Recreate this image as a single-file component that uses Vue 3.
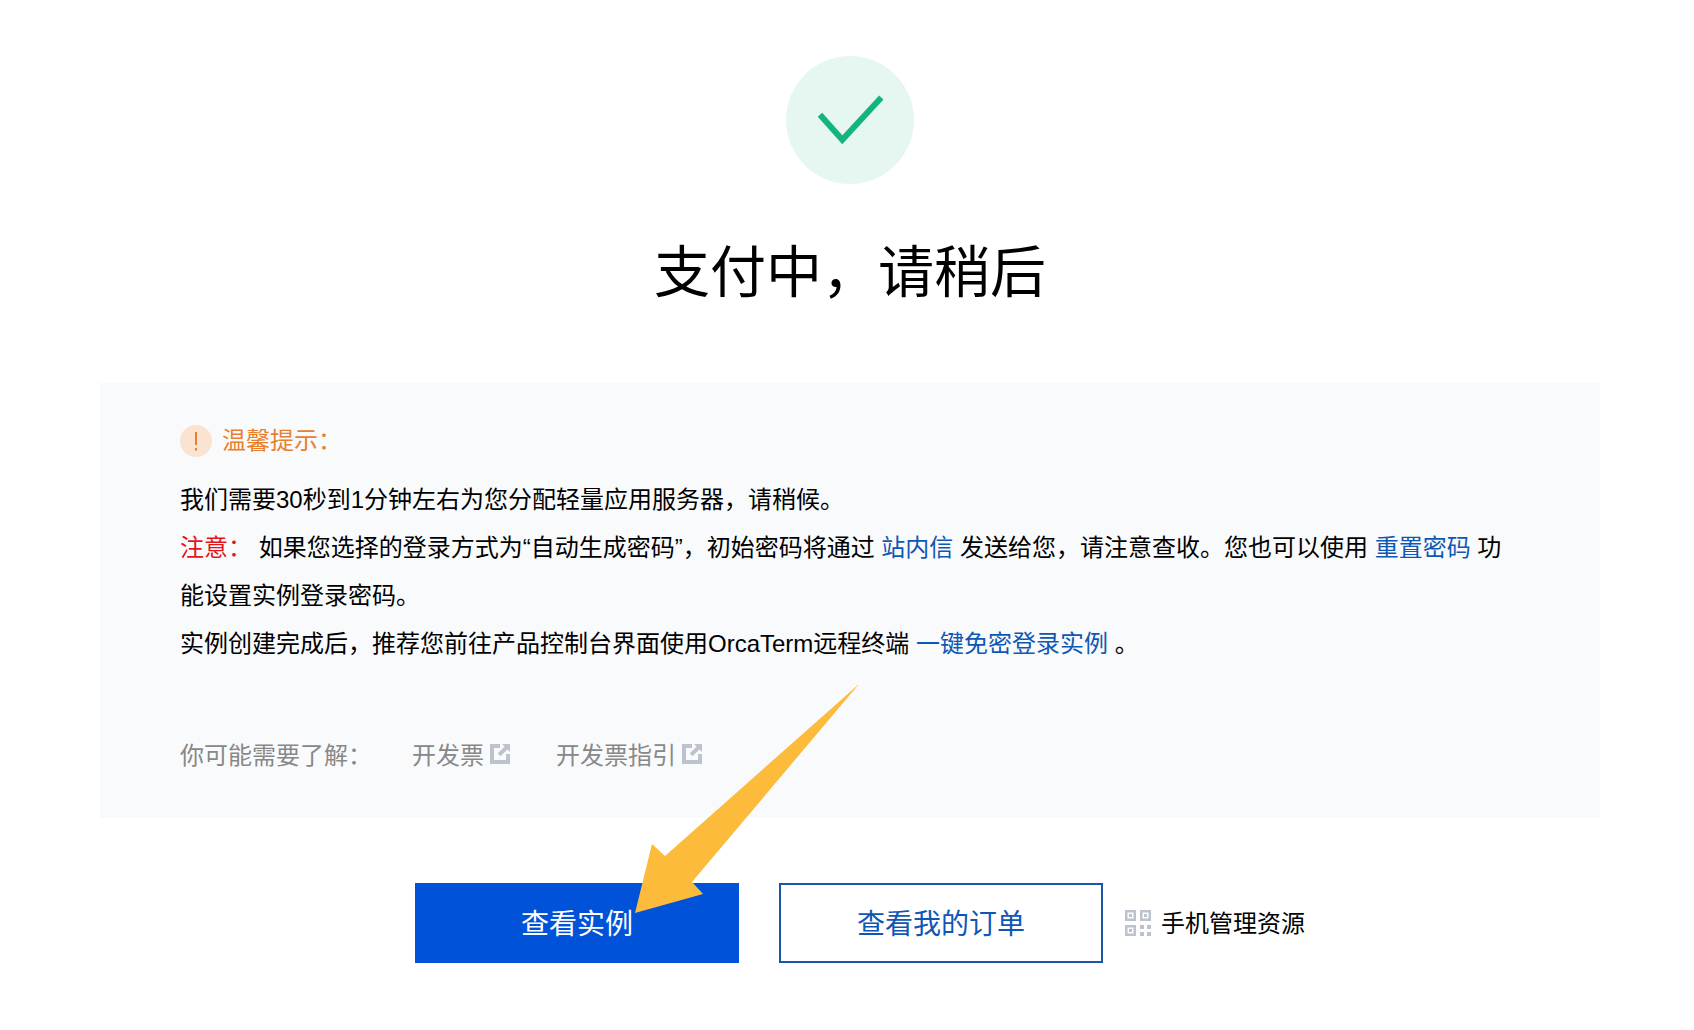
<template>
  <div class="page">
    <div class="status-icon">
      <svg width="128" height="128" viewBox="0 0 128 128">
        <path d="M34 58.7 L56.3 83.8 L95.3 41.5" fill="none" stroke="#14b57d" stroke-width="6" />
      </svg>
    </div>
    <h1 class="title">支付中，请稍后</h1>

    <div class="panel">
      <div class="tip-head">
        <span class="tip-icon">
          <svg width="32" height="32" viewBox="0 0 32 32">
            <rect x="15" y="7" width="2" height="13" fill="#e8802f" />
            <rect x="15" y="23" width="2" height="2.5" fill="#e8802f" />
          </svg>
        </span>
        <span class="tip-text">温馨提示：</span>
      </div>
      <div class="tip-body">
        <p>我们需要30秒到1分钟左右为您分配轻量应用服务器，请稍候。</p>
        <p><span class="warn">注意：</span> 如果您选择的登录方式为“自动生成密码”，初始密码将通过 <a class="link">站内信</a> 发送给您，请注意查收。您也可以使用 <a class="link">重置密码</a> 功能设置实例登录密码。</p>
        <p>实例创建完成后，推荐您前往产品控制台界面使用OrcaTerm远程终端 <a class="link">一键免密登录实例</a> 。</p>
      </div>
      <div class="more">
        <span class="more-text">你可能需要了解：</span>
        <a v-for="item in moreLinks" :key="item" class="more-link">
          <span class="more-text">{{ item }}</span>
          <svg class="ext" width="20" height="20" viewBox="0 0 20 20">
            <path d="M0 0H10V4H4V16H16V10H20V20H0Z" fill="#bcc3cf" />
            <path d="M12 0H20V8L17.4 5.4L10.5 12.3L7.7 9.5L14.6 2.6Z" fill="#bcc3cf" />
          </svg>
        </a>
      </div>
    </div>

    <div class="actions">
      <button class="btn primary">查看实例</button>
      <button class="btn outline">查看我的订单</button>
      <div class="mobile">
        <svg width="26" height="26" viewBox="0 0 26 26" fill="#bcc3cf">
          <path fill-rule="evenodd" d="M0 0H11V11H0ZM2.5 2.5V8.5H8.5V2.5Z" />
          <rect x="4" y="4" width="3" height="3" />
          <path fill-rule="evenodd" d="M15 0H26V11H15ZM17.5 2.5V8.5H23.5V2.5Z" />
          <rect x="19" y="4" width="3" height="3" />
          <path fill-rule="evenodd" d="M0 15H11V26H0ZM2.5 17.5V23.5H8.5V17.5Z" />
          <rect x="4" y="19" width="3" height="3" />
          <rect x="15" y="15" width="4" height="4" />
          <rect x="22" y="15" width="4" height="4" />
          <rect x="15" y="22" width="4" height="4" />
          <rect x="22" y="22" width="4" height="4" />
        </svg>
        <span class="mobile-text">手机管理资源</span>
      </div>
    </div>

    <svg class="arrow" width="1694" height="1030" viewBox="0 0 1694 1030">
      <polygon points="859,684 665,856 652,844 635,913 703,894 692,882" fill="#fdbb3c" />
    </svg>
  </div>
</template>

<script setup>
const moreLinks = ['开发票', '开发票指引']
</script>

<style scoped>
.page {
  position: relative;
  height: 1030px;
  padding-top: 56px;
  box-sizing: border-box;
  overflow: hidden;
  background: #fff;
  color: #000;
  font-family: "Liberation Sans", "Noto Sans CJK SC", sans-serif;
  font-weight: 400;
}
.status-icon {
  width: 128px;
  height: 128px;
  margin: 0 auto;
  transform: translateX(3px);
  border-radius: 50%;
  background: #e6f7f1;
}
.status-icon svg {
  display: block;
}
.title {
  margin: 53px 0 74px;
  padding-left: 6px;
  font-size: 56px;
  line-height: 72px;
  font-weight: 400;
  text-align: center;
}
.panel {
  margin: 0 94px 0 100px;
  padding: 42px 80px 48px;
  background: #f9fafb;
  font-size: 24px;
}
.tip-head {
  display: flex;
  align-items: center;
  gap: 10px;
  height: 32px;
  color: #e8802f;
}
.tip-icon {
  width: 32px;
  height: 32px;
  border-radius: 50%;
  background: #fbe3d1;
}
.tip-icon svg {
  display: block;
}
.tip-text {
  margin-bottom: 5px;
}
.tip-body {
  margin-top: 19px;
  line-height: 48px;
}
.tip-body p {
  margin: 0;
}
.warn {
  color: #e3141e;
}
.link {
  color: #0f57b5;
}
.more {
  display: flex;
  align-items: center;
  height: 32px;
  margin-top: 70px;
  color: #888;
}
.more-text {
  margin-bottom: 1px;
}
.more-link {
  display: flex;
  align-items: center;
  gap: 6px;
  margin-left: 40px;
}
.more-link + .more-link {
  margin-left: 46px;
}
.actions {
  display: flex;
  align-items: center;
  margin-top: 65px;
  padding-left: 415px;
}
.btn {
  width: 324px;
  height: 80px;
  margin-right: 40px;
  padding: 0 0 3px;
  font: inherit;
  font-size: 28px;
  box-sizing: border-box;
  border-radius: 0;
}
.primary {
  background: #0052d9;
  border: none;
  color: #fff;
}
.outline {
  margin-right: 22px;
  background: #fff;
  border: 2px solid #1c56a8;
  color: #0f57b5;
}
.mobile {
  display: flex;
  align-items: center;
  gap: 10px;
  font-size: 24px;
}
.mobile-text {
  margin-bottom: 3px;
}
.arrow {
  position: absolute;
  top: 0;
  left: 0;
  pointer-events: none;
}
</style>

<style>
html, body {
  margin: 0;
  background: #fff;
}
</style>
